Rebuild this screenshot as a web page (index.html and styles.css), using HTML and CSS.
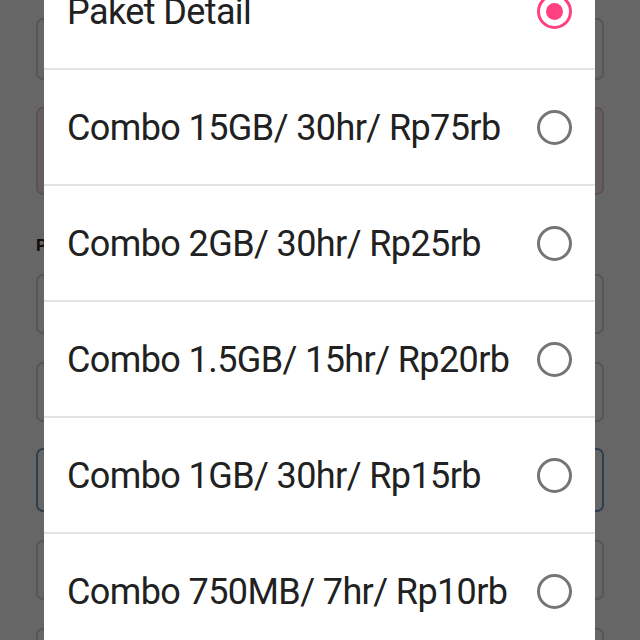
FILE: index.html
```html
<!DOCTYPE html>
<html lang="id">
<head>
<meta charset="utf-8">
<title>Paket Detail</title>
<link rel="stylesheet" href="styles.css">
</head>
<body>
<div class="page">
  <div class="field f1"></div>
  <div class="alert"></div>
  <div class="label">Paket</div>
  <div class="field f3"></div>
  <div class="field f4"></div>
  <div class="field f5 focus"></div>
  <div class="field f6"></div>
  <div class="field f7"></div>
</div>
<div class="overlay"></div>
<div class="dialog">
  <div class="option"><span class="opt-text">Paket Detail</span><span class="radio checked"></span></div>
  <div class="option"><span class="opt-text">Combo 15GB/ 30hr/ Rp75rb</span><span class="radio"></span></div>
  <div class="option"><span class="opt-text">Combo 2GB/ 30hr/ Rp25rb</span><span class="radio"></span></div>
  <div class="option"><span class="opt-text">Combo 1.5GB/ 15hr/ Rp20rb</span><span class="radio"></span></div>
  <div class="option"><span class="opt-text">Combo 1GB/ 30hr/ Rp15rb</span><span class="radio"></span></div>
  <div class="option"><span class="opt-text">Combo 750MB/ 7hr/ Rp10rb</span><span class="radio"></span></div>
</div>
</body>
</html>
```
FILE: styles.css
```css
html, body {
  margin: 0;
  padding: 0;
}
body {
  width: 640px;
  height: 640px;
  overflow: hidden;
  position: relative;
  font-family: Roboto, "Liberation Sans", sans-serif;
  background: #fff;
}
.page {
  box-sizing: border-box;
  height: 640px;
  padding: 18px 36px 0;
  display: flex;
  flex-direction: column;
  background: #fff;
}
.field {
  flex-shrink: 0;
  box-sizing: border-box;
  height: 60px;
  border: 2px solid #d6d6d6;
  border-radius: 7px;
  background: #fff;
}
.f1 { height: 62px; }
.alert {
  flex-shrink: 0;
  box-sizing: border-box;
  height: 88px;
  margin-top: 27px;
  border: 2px solid #e8c9c9;
  border-radius: 7px;
  background: #fbeeee;
}
.label {
  margin-top: 40px;
  height: 20px;
  line-height: 20px;
  font-size: 17px;
  font-weight: bold;
  color: #222;
}
.f3 { margin-top: 19px; }
.f4 { margin-top: 28px; }
.f5 { margin-top: 26px; height: 64px; }
.focus { border-color: #6f9cc6; }
.f6 { margin-top: 28px; }
.f7 { margin-top: 28px; }
.overlay {
  position: absolute;
  inset: 0;
  background: rgba(0, 0, 0, 0.6);
}
.dialog {
  position: absolute;
  top: -46px;
  left: 44px;
  width: 551px;
  background: #fff;
}
.option {
  box-sizing: border-box;
  height: 116px;
  border-bottom: 2px solid #e2e2e2;
  display: flex;
  align-items: center;
  justify-content: space-between;
  padding: 0 23px;
}
.opt-text {
  font-size: 36px;
  letter-spacing: -0.6px;
  color: #212121;
  white-space: nowrap;
  position: relative;
  top: 1px;
}
.radio {
  flex-shrink: 0;
  box-sizing: border-box;
  width: 35px;
  height: 35px;
  border: 3.5px solid #757575;
  border-radius: 50%;
  position: relative;
}
.radio.checked {
  border-color: #ff4081;
}
.radio.checked::after {
  content: "";
  position: absolute;
  left: 50%;
  top: 50%;
  width: 17px;
  height: 17px;
  margin: -8.5px 0 0 -8.5px;
  border-radius: 50%;
  background: #ff4081;
}
```
